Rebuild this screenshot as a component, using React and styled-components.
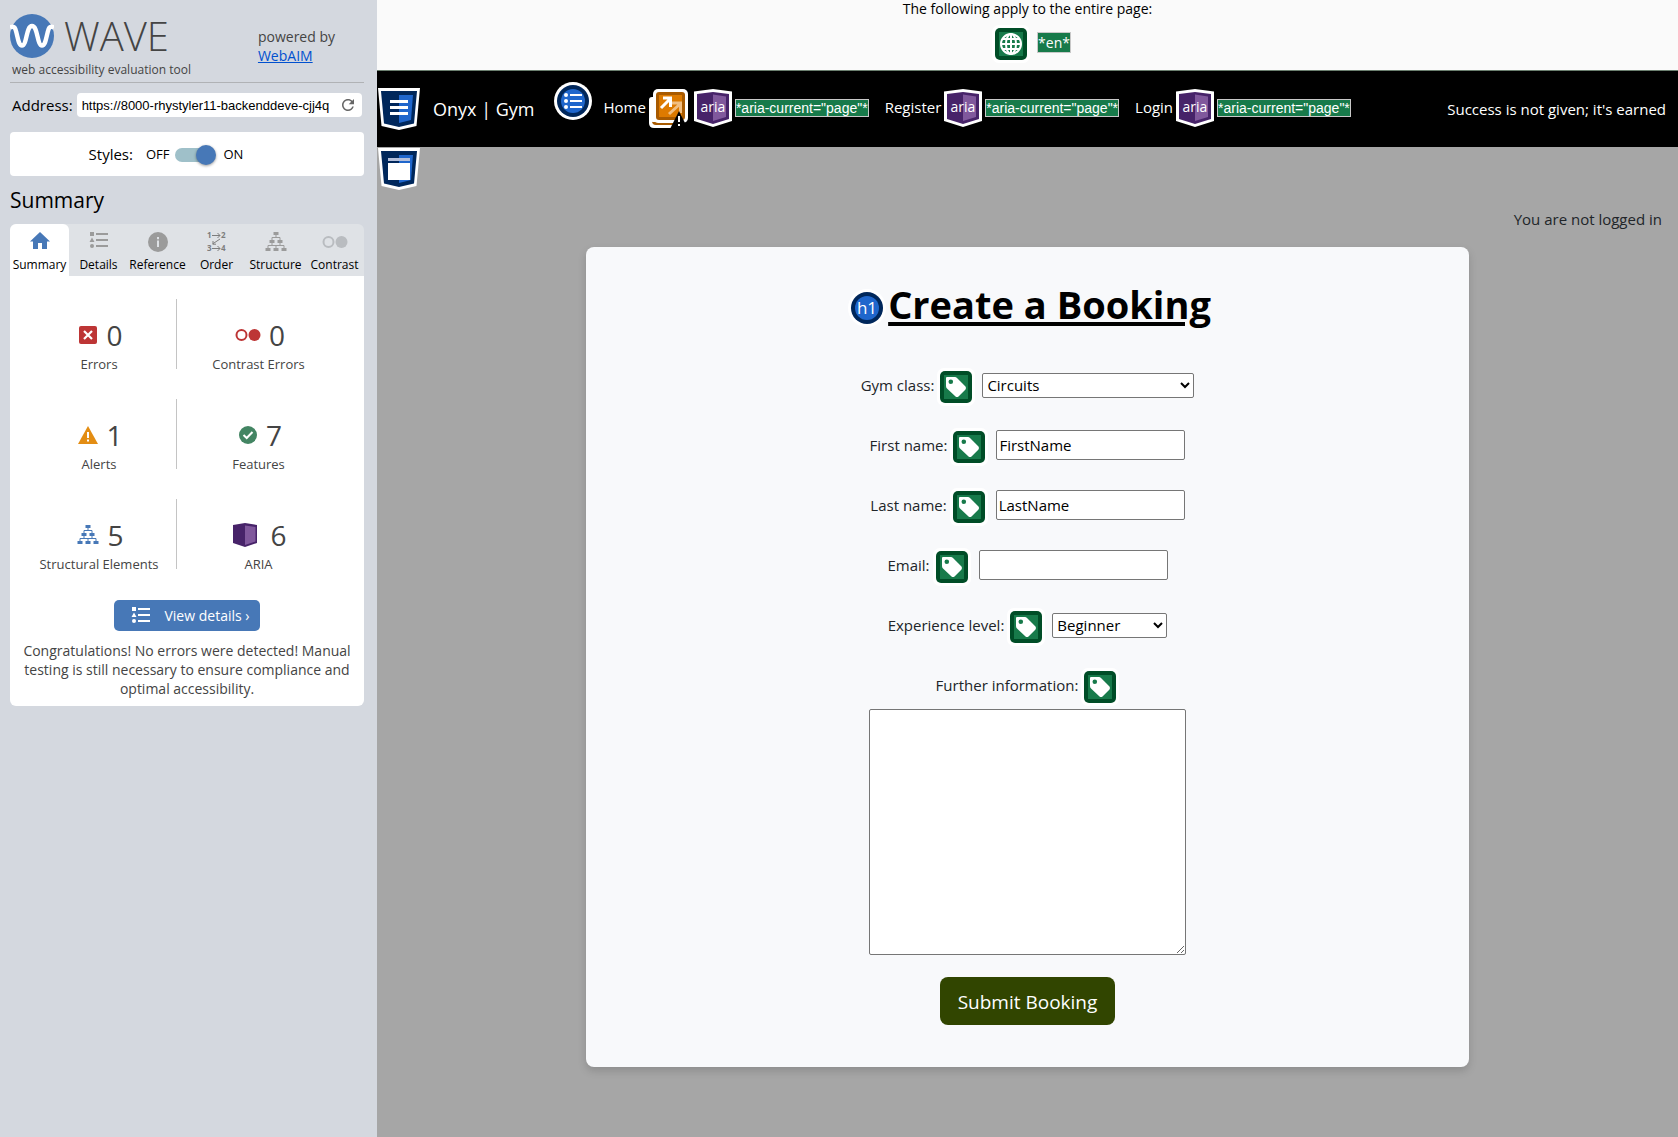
import React, { useState } from "react";
import styled, { createGlobalStyle } from "styled-components";

const GlobalStyle = createGlobalStyle`
  *, *::before, *::after { box-sizing: border-box; }
  body {
    margin: 0;
    font-family: "Open Sans", "Noto Sans", sans-serif;
    font-size: 14px;
    color: #212529;
    background: #a6a6a6;
  }
  button, input, select, textarea { font-family: inherit; }
  svg { display: block; flex: none; }
`;

const Layout = styled.div`
  display: flex;
  min-height: 100vh;
`;

/* ---------- Sidebar ---------- */

const Sidebar = styled.aside`
  flex: none;
  width: 377px;
  padding: 0 13px 0 10px;
  background: #d4d8df;
  color: #000;
`;

const SidebarHeader = styled.header`
  display: flex;
  justify-content: space-between;
  padding: 14px 29px 3px 0;
  border-bottom: 1px solid #b0b2b5;
  color: #444;
`;

const Logo = styled.div`
  display: flex;
  align-items: center;
  gap: 10px;
  height: 44px;
  font-size: 40px;
  font-weight: 300;
  line-height: 44px;
`;

const Tagline = styled.div`
  padding: 3px 0 0 2px;
  font-size: 12px;
  line-height: 18px;
`;

const Powered = styled.div`
  padding-top: 13px;
  line-height: 19px;

  a { display: block; color: #0050cf; }
`;

const AddressForm = styled.form`
  display: flex;
  align-items: center;
  gap: 4px;
  margin-top: 10px;
  padding: 0 2px;
  font-size: 15px;
`;

const AddressBox = styled.div`
  flex: 1;
  display: flex;
  align-items: center;
  min-width: 0;
  height: 24px;
  padding: 0 5px;
  border-radius: 4px;
  background: #fff;
`;

const AddressInput = styled.input`
  flex: 1;
  min-width: 0;
  padding: 0;
  border: 0;
  outline: 0;
  background: transparent;
  font-family: "Liberation Sans", Arial, sans-serif;
  font-size: 13px;
`;

const IconButton = styled.button`
  padding: 0 0 0 5px;
  border: 0;
  background: none;
`;

const StylesBox = styled.div`
  display: flex;
  align-items: center;
  justify-content: center;
  height: 44px;
  margin-top: 15px;
  padding-right: 42px;
  border-radius: 4px;
  background: #fff;
`;

const StylesLabel = styled.label`
  margin-right: 13px;
  font-size: 15px;
`;

const ToggleText = styled.span`
  font-size: 13px;
`;

const Toggle = styled.input`
  appearance: none;
  position: relative;
  width: 36px;
  height: 14px;
  margin: 2px 13px 0 5px;
  border-radius: 7px;
  background: #9fc0c9;

  &::before {
    content: "";
    position: absolute;
    top: -3px;
    left: 0;
    width: 20px;
    height: 20px;
    border-radius: 50%;
    background: #4778b7;
    box-shadow: 0 1px 3px rgba(0, 0, 0, 0.4);
  }
  &:checked::before { left: 21px; }
`;

const SidebarTitle = styled.h2`
  margin: 0;
  font-size: 21px;
  font-weight: 400;
  line-height: 48px;
`;

const TabList = styled.div`
  display: grid;
  grid-template-columns: repeat(6, 1fr);
  border-radius: 6px 6px 0 0;
  background: #dfe2e6;
`;

const Tab = styled.button`
  display: flex;
  flex-direction: column;
  align-items: center;
  height: 52px;
  padding: 6px 0 0;
  border: 0;
  border-radius: 6px 6px 0 0;
  background: ${(p) => (p.$active ? "#fff" : "transparent")};
  color: #000;
  font-size: 12px;
  line-height: 18px;
  white-space: nowrap;

  svg { margin-bottom: 2px; }
`;

const Panel = styled.section`
  padding: 23px 12px 8px;
  border-radius: 0 0 6px 6px;
  background: #fff;
  color: #444;
  text-align: center;
`;

const Stats = styled.div`
  display: grid;
  grid-template-columns: 155fr 163fr;
  row-gap: 30px;
  padding-right: 12px;
`;

const Stat = styled.div`
  height: 70px;
  padding-top: 16px;
  font-size: 13px;
  line-height: 18px;

  &:nth-child(odd) { border-right: 1px solid #c4c4c4; }
`;

const StatValue = styled.div`
  display: flex;
  align-items: center;
  justify-content: center;
  gap: 8px;
  padding-left: 3px;
  font-size: 28px;
  line-height: 40px;
`;

const DetailsButton = styled.button`
  display: inline-flex;
  align-items: center;
  gap: 13px;
  height: 31px;
  margin: 31px 0 10px;
  padding: 0 10px 0 17px;
  border: 0;
  border-radius: 5px;
  background: #4778b7;
  color: #fff;
  font-size: 14px;

  svg { margin-top: 3px; }
`;

const Message = styled.p`
  margin: 0;
  line-height: 19px;
`;

/* ---------- Evaluated page ---------- */

const Page = styled.div`
  flex: 1;
  min-width: 0;
  font-size: 15px;
`;

const Notice = styled.div`
  display: flex;
  flex-direction: column;
  align-items: center;
  height: 71px;
  border-bottom: 1px solid #6b7f6f;
  background: #fafafa;
  color: #000;
  font-size: 14px;
  line-height: 18px;
`;

const NoticeMarks = styled.div`
  display: flex;
  align-items: center;
  gap: 7px;
  margin-top: 7px;
  padding-left: 8px;

  span { margin-bottom: 3px; }
`;

const Mark = styled.span`
  border: 1px solid #c8c8c8;
  background: #177a4a;
  color: #fff;
  font-family: ${(p) => (p.$plain ? "inherit" : '"Liberation Sans", Arial, sans-serif')};
  font-size: 14px;
  line-height: ${(p) => (p.$plain ? "19px" : "16px")};
  white-space: nowrap;
`;

const Nav = styled.nav`
  display: flex;
  align-items: center;
  height: 76px;
  padding: 0 12px 0 1px;
  background: #000;
  color: #fff;

  a { color: inherit; text-decoration: none; white-space: nowrap; }
`;

const Brand = styled.a`
  margin: 0 19px 0 13px;
  font-size: 18px;
`;

const ListMark = styled.span`
  margin: 0 12px 16px 0;
`;

const NavList = styled.ul`
  display: flex;
  gap: 16px;
  margin: 0;
  padding: 0 0 2px;
  list-style: none;
`;

const NavItem = styled.li`
  display: flex;
  align-items: center;
  gap: 3px;

  a { margin-bottom: 2px; }
`;

const Slogan = styled.span`
  margin-left: auto;
  white-space: nowrap;
`;

const Main = styled.main`
  padding: 0 0 70px;
`;

const Landmark = styled.div`
  padding: 1px 0 0 1px;
`;

const LoginState = styled.p`
  margin: 17px 16px 16px;
  line-height: 24px;
  text-align: right;
`;

const Card = styled.section`
  margin: 0 209px;
  padding: 33px 16px 42px;
  border-radius: 8px;
  background: #f8f9fb;
  box-shadow: 0 4px 8px rgba(0, 0, 0, 0.15);
`;

const Title = styled.h1`
  display: flex;
  align-items: center;
  justify-content: center;
  gap: 2px;
  margin: 0 0 37px;
  padding-left: 4px;
  color: #000;
  font-size: 38px;
  font-weight: 700;
  line-height: 48px;

  svg { margin-top: 8px; }
  span {
    text-decoration: underline;
    text-decoration-thickness: 4px;
    text-underline-offset: 3px;
  }
`;

const BookingForm = styled.form`
  display: flex;
  flex-direction: column;
  align-items: center;
`;

const Field = styled.div`
  display: flex;
  align-items: center;
  gap: ${(p) => (p.$wide ? "8px" : "7px")};
  height: 40px;
  margin-bottom: ${(p) => (p.$last ? "4px" : "20px")};

  label { display: flex; align-items: center; gap: 3px; }
  svg { margin-top: 3px; }
`;

const TextInput = styled.input`
  width: 189px;
  height: 30px;
  padding: 1px 2px;
  border: 1px solid #767676;
  border-radius: 2px;
  background: #fff;
  color: #000;
  font-size: 15px;
`;

const Select = styled.select`
  width: ${(p) => p.$width}px;
  height: 25px;
  border: 1px solid #767676;
  border-radius: 2px;
  background-color: #fff;
  color: #000;
  font-size: 15px;
`;

const TextArea = styled.textarea`
  width: 317px;
  height: 246px;
  padding: 2px;
  border: 1px solid #767676;
  border-radius: 2px;
  background: #fff;
  font-size: 15px;
`;

const Submit = styled.button`
  height: 48px;
  margin-top: 22px;
  padding: 2px 18px 0;
  border: 0;
  border-radius: 8px;
  background: #314500;
  color: #fff;
  font-size: 19px;
`;

/* ---------- Icons ---------- */

const WaveLogo = () => (
  <svg width="44" height="44" viewBox="0 0 44 44">
    <circle cx="22" cy="22" r="22" fill="#4778b7" />
    <path
      d="M0 13.500C5 11 5.500 15 6.500 19C8.500 27 9 31.500 12 31.500C17 31.500 16 12 22 12C28 12 27 31.500 32 31.500C35 31.500 35.500 27 37.500 19C38.500 15 39 11 44 13.500"
      fill="none" stroke="#fff" strokeWidth="4.400"
    />
  </svg>
);

const RefreshIcon = () => (
  <svg width="18" height="18" viewBox="0 0 24 24" fill="#666">
    <path d="M17.65 6.35C16.2 4.9 14.21 4 12 4c-4.42 0-7.99 3.58-7.99 8s3.57 8 7.99 8c3.73 0 6.84-2.55 7.73-6h-2.08c-.82 2.33-3.04 4-5.65 4-3.31 0-6-2.69-6-6s2.69-6 6-6c1.66 0 3.14.69 4.22 1.78L13 11h7V4l-2.35 2.35z" />
  </svg>
);

const HomeIcon = () => (
  <svg width="24" height="24" viewBox="0 0 24 24" fill="#4778b7">
    <path d="M12 2 2 11.500H5V19H10V13H14V19H19V11.500H22Z" />
  </svg>
);

const ListIcon = ({ color = "#9b9b9b" }) => (
  <svg width="20" height="24" viewBox="0 0 20 24" fill={color}>
    <path d="M1 2H5V6H1ZM3 7.500 5.500 12H.5Z" />
    <circle cx="3" cy="16" r="2" />
    <path d="M7 3H19V5H7ZM7 9H19V11H7ZM7 15H19V17H7Z" />
  </svg>
);

const InfoIcon = () => (
  <svg width="24" height="24" viewBox="0 0 24 24">
    <circle cx="12" cy="12" r="10" fill="#9b9b9b" />
    <path d="M11 7H13V9.200H11ZM11 10.500H13V17H11Z" fill="#dfe2e6" />
  </svg>
);

const OrderIcon = () => (
  <svg width="20" height="24" viewBox="0 0 20 24" fill="#7d7d7d" fontSize="8" fontWeight="700">
    <text x="0" y="8">1</text>
    <text x="14" y="8">2</text>
    <text x="0" y="21">3</text>
    <text x="14" y="21">4</text>
    <path d="M5 5.500H13M10.500 3 13 5.500 10.500 8M5 18.500H13M10.500 16 13 18.500 10.500 21M13 9 5.500 14M6 11V14.200H9" fill="none" stroke="#7d7d7d" />
  </svg>
);

const TreeIcon = ({ color = "#9b9b9b" }) => (
  <svg width="22" height="24" viewBox="0 0 22 24" fill={color}>
    <path d="M8.500 2H13.500V5H8.500ZM4.500 10H9.500V13H4.500ZM12.500 10H17.500V13H12.500ZM.5 18H5.500V21H.5ZM8.500 18H13.500V21H8.500ZM16.500 18H21.500V21H16.500Z" />
    <path d="M11 5V7.500M7 10V7.500H15V10M7 13V15.500M15 13V15.500M3 18V15.500H19V18M11 18V15.500" fill="none" stroke={color} />
  </svg>
);

const ContrastIcon = ({ color = "#b9bcc0" }) => (
  <svg width="26" height="24" viewBox="0 0 26 24" fill={color}>
    <circle cx="6.500" cy="12" r="5" fill="none" stroke={color} strokeWidth="2" />
    <circle cx="19.500" cy="12" r="6" />
  </svg>
);

const ErrorIcon = () => (
  <svg width="20" height="20" viewBox="0 0 20 20">
    <rect x="1" y="1" width="18" height="18" rx="2" fill="#bd3535" />
    <path d="M6 6 14 14M14 6 6 14" stroke="#fff" strokeWidth="2.200" />
  </svg>
);

const AlertIcon = () => (
  <svg width="20" height="20" viewBox="0 0 20 20">
    <path d="M10 1 20 19H0Z" fill="#e38d13" />
    <path d="M9 7H11V13H9ZM9 14.500H11V16.500H9Z" fill="#fff" />
  </svg>
);

const FeatureIcon = () => (
  <svg width="20" height="20" viewBox="0 0 20 20">
    <circle cx="10" cy="10" r="9" fill="#438563" />
    <path d="M5.500 10 8.700 13 14.500 7" fill="none" stroke="#fff" strokeWidth="2" />
  </svg>
);

const AriaSmallIcon = () => (
  <svg width="29" height="24" viewBox="0 0 29 24">
    <path d="M0 2 12 0 24 2V20L12 24 0 20Z" fill="#472369" />
    <path d="M12 2.500 22.500 4V18.500L12 22Z" fill="#80589c" />
  </svg>
);

const AriaIcon = () => (
  <svg width="38" height="38" viewBox="0 0 38 38">
    <path d="M0 2.500 19 0 38 2.500V32L19 38 0 32Z" fill="#fff" />
    <path d="M3 5 19 3 35 5V30L19 35 3 30Z" fill="#472369" />
    <path d="M19 5.500 32 7.500V28L19 32Z" fill="#80589c" />
    <text x="19" y="23" fill="#fff" fontSize="14" textAnchor="middle" fontFamily="Open Sans">aria</text>
  </svg>
);

const ShieldBase = ({ children }) => (
  <svg width="42" height="42" viewBox="0 0 42 42">
    <path d="M0 0H42L38.500 38 21 42 3.500 38Z" fill="#fff" />
    <path d="M3 3H39L36 35.500 21 39 6 35.500Z" fill="#00275b" />
    <path d="M21 7H35L33 32 21 35Z" fill="#1f66cc" />
    {children}
  </svg>
);

const HeaderIcon = () => (
  <ShieldBase>
    <path d="M12 12H30V15H12ZM12 18H30V21H12ZM12 24H30V27H12Z" fill="#fff" />
  </ShieldBase>
);

const MainIcon = () => (
  <ShieldBase>
    <path d="M10 10H32V13H10Z" fill="#b3bfdb" />
    <path d="M10 15H32V32H10Z" fill="#fff" />
  </ShieldBase>
);

const ListMarkIcon = () => (
  <svg width="38" height="38" viewBox="0 0 38 38">
    <circle cx="19" cy="19" r="19" fill="#fff" />
    <circle cx="19" cy="19" r="16" fill="#00275b" />
    <circle cx="19" cy="19" r="12" fill="#1f66cc" />
    <g fill="#fff">
      <circle cx="12" cy="13" r="2" />
      <circle cx="12" cy="19" r="2" />
      <circle cx="12" cy="25" r="2" />
      <path d="M16 12H28V14H16ZM16 18H28V20H16ZM16 24H28V26H16Z" />
    </g>
  </svg>
);

const RedundantIcon = () => (
  <svg width="42" height="39" viewBox="0 0 42 39">
    <path d="M5 8H3Q0 8 0 11V34Q0 39 5 39H26L34 30Z" fill="#fff" />
    <path d="M3 11V32Q3 36 7 36H24V33H3Z" fill="#a85a00" />
    <rect x="4" y="0" width="35" height="34" rx="5" fill="#fff" />
    <rect x="7" y="3" width="29" height="28" rx="3" fill="#a85a00" />
    <rect x="10" y="6" width="23" height="22" fill="#dd7a00" />
    <path d="M20 25 31 15M22 14H31.500V24" fill="none" stroke="#f0be82" strokeWidth="3" />
    <path d="M12 19 21 10M14 9H21.500V18" fill="none" stroke="#fff" strokeWidth="3" />
    <path d="M30 22 38.500 39H21.500Z" fill="#000" />
    <path d="M29 27H31V33H29ZM29 35H31V37H29Z" fill="#fff" />
  </svg>
);

const FeatureBase = ({ children }) => (
  <svg width="38" height="38" viewBox="0 0 38 38">
    <rect width="38" height="38" rx="7" fill="#fff" />
    <rect x="3" y="3" width="32" height="32" rx="5" fill="#004d27" />
    <rect x="7" y="7" width="24" height="24" fill="#177a4a" />
    {children}
  </svg>
);

const GlobeIcon = () => (
  <FeatureBase>
    <g fill="none" stroke="#fff" strokeWidth="2">
      <circle cx="19" cy="19" r="10" />
      <ellipse cx="19" cy="19" rx="5" ry="10" />
      <path d="M9 19H29M19 9V29M11 14H27M11 24H27" />
    </g>
  </FeatureBase>
);

const TagIcon = () => (
  <FeatureBase>
    <path fillRule="evenodd" fill="#fff" d="M10 9H18Q19 9 20 10L28.500 18.500Q29.500 20 28.500 21.500L21.500 28.500Q20 29.500 18.500 28.500L10 20.500Q9 19.500 9 18V10Q9 9 10 9ZM13.800 11.500A2.300 2.300 0 1 0 13.800 16.100A2.300 2.300 0 1 0 13.800 11.500Z" />
  </FeatureBase>
);

const HeadingIcon = () => (
  <svg width="38" height="38" viewBox="0 0 38 38">
    <circle cx="19" cy="19" r="19" fill="#fff" />
    <circle cx="19" cy="19" r="16" fill="#00275b" />
    <circle cx="19" cy="19" r="12" fill="#1f66cc" />
    <text x="19" y="25" fill="#fff" fontSize="17" fontWeight="400" textAnchor="middle">h1</text>
  </svg>
);

/* ---------- Data ---------- */

const tabs = [
  { name: "Summary", Icon: HomeIcon },
  { name: "Details", Icon: ListIcon },
  { name: "Reference", Icon: InfoIcon },
  { name: "Order", Icon: OrderIcon },
  { name: "Structure", Icon: TreeIcon },
  { name: "Contrast", Icon: ContrastIcon },
];

const stats = [
  { label: "Errors", value: 0, icon: <ErrorIcon /> },
  { label: "Contrast Errors", value: 0, icon: <ContrastIcon color="#bd3535" /> },
  { label: "Alerts", value: 1, icon: <AlertIcon /> },
  { label: "Features", value: 7, icon: <FeatureIcon /> },
  { label: "Structural Elements", value: 5, icon: <TreeIcon color="#4778b7" /> },
  { label: "ARIA", value: 6, icon: <AriaSmallIcon /> },
];

const links = ["Home", "Register", "Login"];

export default function App() {
  const [active, setActive] = useState("Summary");
  return (
    <>
      <GlobalStyle />
      <Layout>
        <Sidebar>
          <SidebarHeader>
            <div>
              <Logo><WaveLogo />WAVE</Logo>
              <Tagline>web accessibility evaluation tool</Tagline>
            </div>
            <Powered>powered by <a href="#webaim">WebAIM</a></Powered>
          </SidebarHeader>
          <AddressForm onSubmit={(e) => e.preventDefault()}>
            <label htmlFor="address">Address:</label>
            <AddressBox>
              <AddressInput id="address" defaultValue="https://8000-rhystyler11-backenddeve-cjj4q" />
              <IconButton type="submit" aria-label="Reload"><RefreshIcon /></IconButton>
            </AddressBox>
          </AddressForm>
          <StylesBox>
            <StylesLabel htmlFor="styles">Styles:</StylesLabel>
            <ToggleText>OFF</ToggleText>
            <Toggle id="styles" type="checkbox" defaultChecked />
            <ToggleText>ON</ToggleText>
          </StylesBox>
          <SidebarTitle>Summary</SidebarTitle>
          <TabList role="tablist">
            {tabs.map(({ name, Icon }) => (
              <Tab
                key={name}
                type="button"
                role="tab"
                aria-selected={active === name}
                $active={active === name}
                onClick={() => setActive(name)}
              >
                <Icon />
                {name}
              </Tab>
            ))}
          </TabList>
          <Panel>
            <Stats>
              {stats.map((s) => (
                <Stat key={s.label}>
                  <StatValue>{s.icon}{s.value}</StatValue>
                  {s.label}
                </Stat>
              ))}
            </Stats>
            <DetailsButton type="button"><ListIcon color="#fff" />View details ›</DetailsButton>
            <Message>
              Congratulations! No errors were detected! Manual testing is still necessary to
              ensure compliance and optimal accessibility.
            </Message>
          </Panel>
        </Sidebar>

        <Page>
          <Notice>
            The following apply to the entire page:
            <NoticeMarks><GlobeIcon /><Mark $plain>*en*</Mark></NoticeMarks>
          </Notice>
          <Nav>
            <HeaderIcon />
            <Brand href="#top">Onyx | Gym</Brand>
            <ListMark><ListMarkIcon /></ListMark>
            <NavList>
              {links.map((name) => (
                <NavItem key={name}>
                  <a href={`#${name.toLowerCase()}`}>{name}</a>
                  {name === "Home" && <RedundantIcon />}
                  <AriaIcon />
                  <Mark>*aria-current="page"*</Mark>
                </NavItem>
              ))}
            </NavList>
            <Slogan>Success is not given; it's earned</Slogan>
          </Nav>
          <Main>
            <Landmark><MainIcon /></Landmark>
            <LoginState>You are not logged in</LoginState>
            <Card>
              <Title><HeadingIcon /><span>Create a Booking</span></Title>
              <BookingForm onSubmit={(e) => e.preventDefault()}>
                <Field>
                  <label htmlFor="gym-class">Gym class: <TagIcon /></label>
                  <Select id="gym-class" $width={212}><option>Circuits</option></Select>
                </Field>
                <Field $wide>
                  <label htmlFor="first-name">First name: <TagIcon /></label>
                  <TextInput id="first-name" defaultValue="FirstName" />
                </Field>
                <Field $wide>
                  <label htmlFor="last-name">Last name: <TagIcon /></label>
                  <TextInput id="last-name" defaultValue="LastName" />
                </Field>
                <Field $wide>
                  <label htmlFor="email">Email: <TagIcon /></label>
                  <TextInput id="email" type="email" />
                </Field>
                <Field>
                  <label htmlFor="level">Experience level: <TagIcon /></label>
                  <Select id="level" $width={115}><option>Beginner</option></Select>
                </Field>
                <Field $last>
                  <label htmlFor="info">Further information: <TagIcon /></label>
                </Field>
                <TextArea id="info" />
                <Submit type="submit">Submit Booking</Submit>
              </BookingForm>
            </Card>
          </Main>
        </Page>
      </Layout>
    </>
  );
}
